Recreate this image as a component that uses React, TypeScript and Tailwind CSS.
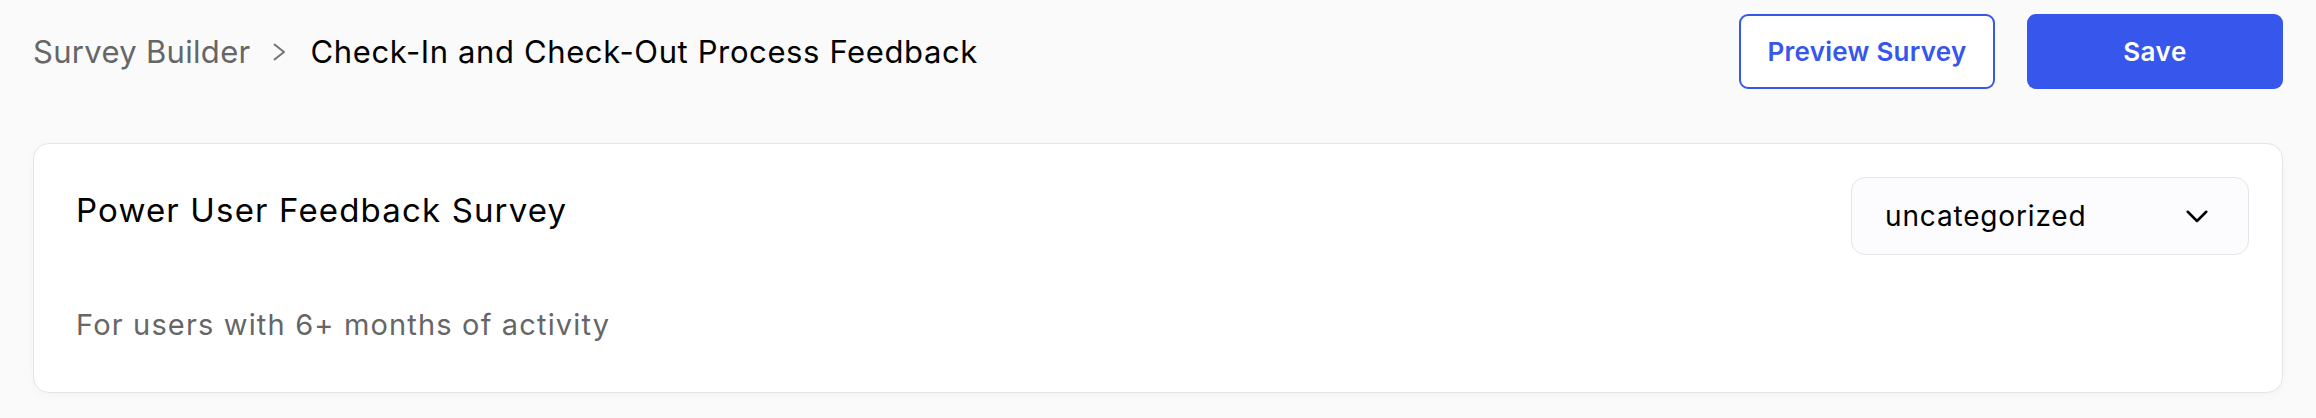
const font = { fontFamily: "Inter, 'Noto Sans', sans-serif" };

export default function App() {
  return (
    <div
      className="min-h-[418px] w-full bg-[#fafafa] px-[33px] pt-[14px] text-black"
      style={font}
    >
      <header className="flex h-[75px] items-center justify-between">
        <nav className="flex items-center text-[31px] leading-none">
          <span className="tracking-[0.01em] text-[#666666]">Survey Builder</span>
          <svg width="15" height="18" viewBox="0 0 15 18" fill="none" className="ml-[21px] mr-[24px] text-[#737373]">
            <path d="M2.5 1.5 L12 9 L2.5 16.5" stroke="currentColor" strokeWidth="2" strokeLinecap="round" strokeLinejoin="round" />
          </svg>
          <span className="tracking-[0.02em] text-black">Check-In and Check-Out Process Feedback</span>
        </nav>
        <div className="flex items-center gap-[32px]">
          <button className="flex h-[75px] w-[256px] items-center justify-center rounded-[9px] border-2 border-[#3656ec] bg-white text-[26px] font-semibold tracking-[0.01em] text-[#3656ec]">
            Preview Survey
          </button>
          <button className="flex h-[75px] w-[256px] items-center justify-center rounded-[9px] bg-[#3656ec] text-[26px] font-semibold tracking-[0.02em] text-white">
            Save
          </button>
        </div>
      </header>

      <section className="mt-[54px] flex h-[250px] justify-between rounded-[16px] border border-[#e5e5e5] bg-white pl-[42px] pr-[33px] pt-[33px] shadow-[0_2px_10px_rgba(0,0,0,0.03)]">
        <div>
          <h1 className="mt-[11px] text-[33px] leading-[44px] tracking-[0.035em] text-black">
            Power User Feedback Survey
          </h1>
          <p className="mt-[73px] text-[29px] leading-[40px] tracking-[0.04em] text-[#666666]">
            For users with 6+ months of activity
          </p>
        </div>
        <button className="flex h-[78px] w-[398px] items-center justify-between rounded-[14px] border border-[#e5e5e5] bg-[#fcfcfe] pl-[33px] pr-[40px] text-[28px] tracking-[0.03em] text-black">
          <span>uncategorized</span>
          <svg width="22" height="13" viewBox="0 0 22 13" fill="none">
            <path d="M1.75 1.75 L11 11 L20.25 1.75" stroke="currentColor" strokeWidth="2.5" strokeLinecap="round" strokeLinejoin="round" />
          </svg>
        </button>
      </section>
    </div>
  );
}
